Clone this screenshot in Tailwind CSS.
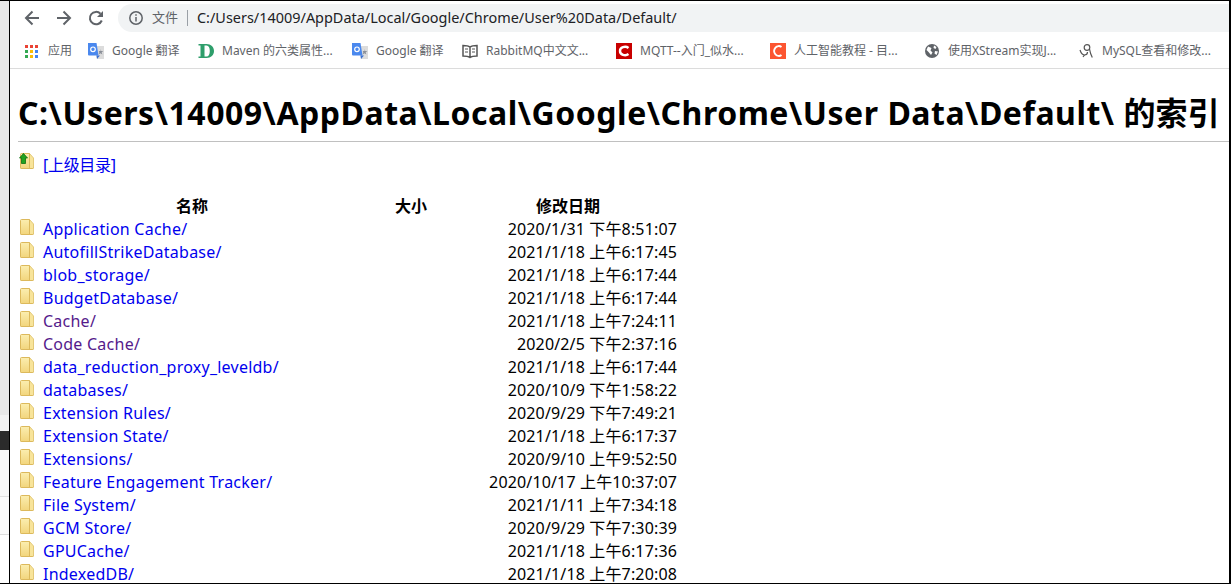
<!DOCTYPE html>
<html lang="zh-CN">
<head>
<meta charset="UTF-8">
<title>Default 的索引</title>
<script src="https://cdn.jsdelivr.net/npm/@tailwindcss/browser@4"></script>
</head>
<body class="w-[1231px] h-[584px] overflow-hidden bg-white font-['Noto_Sans','Noto_Sans_CJK_SC',sans-serif]">
<svg class="absolute w-0 h-0">
  <defs>
    <linearGradient id="fg" x1="0" y1="0" x2="0" y2="1"><stop offset="0" stop-color="#fbeeb0"/><stop offset="1" stop-color="#f2d57c"/></linearGradient>
  </defs>
  <symbol id="folder" viewBox="0 0 14 16">
    <path d="M9.500.5 13.500 5v9.500a1 1 0 0 1-1 1h-3z" fill="#f8e49a" stroke="#e3c978"/>
    <path d="M.5 1.500a1 1 0 0 1 1-1h8v15h-8a1 1 0 0 1-1-1z" fill="url(#fg)" stroke="#dcb95c"/>
    <path d="M.5 14.500a1 1 0 0 0 1 1h11a1 1 0 0 0 1-1" fill="none" stroke="#dcb95c"/>
  </symbol>
  <symbol id="gt" viewBox="0 0 16 16">
    <path d="M6 3h10v13H9z" fill="#dcdcdc"/>
    <path d="M0 0h8.500l2 12.500H1a1 1 0 0 1-1-1z" fill="#4a88ee"/>
    <path d="M8.500 12.500 9 16l3-3.500z" fill="#3a6fd0"/>
    <circle cx="5" cy="6.300" r="2.300" fill="none" stroke="#fff" stroke-width="1.200"/>
    <path d="m12.500 6 .8 2h2l-1.600 1.300.6 2.100-1.800-1.200-1.800 1.200.6-2.100L10.700 8h2z" fill="#8a8f98"/>
  </symbol>
</svg>

<div class="flex h-[584px] border-t border-b border-black">
  <!-- sliver of the window behind -->
  <div class="w-[9px] flex flex-col shrink-0 bg-[#e8e8e8]">
    <div class="h-[414px]"></div>
    <div class="h-[16px] bg-[#f2f2f2]"></div>
    <div class="h-[19px] bg-[#2b2b2b]"></div>
    <div class="h-[47px] bg-[#f8f8f8] border-b border-[#e0e0e0]"></div>
    <div class="h-[38px] bg-[#fbfbfb] border-b border-[#dddddd]"></div>
    <div class="flex-1 bg-white"></div>
  </div>

  <div class="flex-1 min-w-0 flex flex-col border-l border-r-2 border-black overflow-hidden">
    <!-- toolbar -->
    <div class="h-[31px] shrink-0 flex items-start pt-[3px]">
      <div class="w-[108px] h-[28px] shrink-0 flex items-center text-[#5f6368]">
        <svg class="ml-[14px] w-[16px] h-[16px]" viewBox="0 0 16 16" fill="none" stroke="currentColor" stroke-width="2"><path d="M15 8H2M8.500 1.500 2 8l6.500 6.500"/></svg>
        <svg class="ml-[16px] w-[16px] h-[16px]" viewBox="0 0 16 16" fill="none" stroke="currentColor" stroke-width="2"><path d="M1 8h13M7.500 1.500 14 8l-6.500 6.500"/></svg>
        <svg class="ml-[16px] w-[16px] h-[16px]" viewBox="0 0 16 16" fill="none" stroke="currentColor" stroke-width="2"><path d="M13.800 10.500A6.200 6.200 0 1 1 12.500 3.700"/><path d="M15 1v6H9z" fill="currentColor" stroke="none"/></svg>
      </div>
      <div class="flex-1 h-[28px] flex items-center rounded-l-[14px] bg-[#f1f3f4]">
        <svg class="ml-[10px] w-[16px] h-[16px] text-[#5f6368]" viewBox="0 0 16 16" fill="none" stroke="currentColor" stroke-width="1.500"><circle cx="8" cy="8" r="6.200"/><path d="M8 7v4.500M8 4.200v1.600"/></svg>
        <span class="ml-[8px] w-[28px] text-[13px] text-[#5f6368] whitespace-nowrap">文件</span>
        <span class="ml-[7px] w-px h-[16px] bg-[#9aa0a6]"></span>
        <span class="ml-[9px] text-[14.45px] text-[#202124] whitespace-nowrap">C:/Users/14009/AppData/Local/Google/Chrome/User%20Data/Default/</span>
      </div>
    </div>

    <!-- bookmarks -->
    <div class="h-[37px] shrink-0 flex items-center pt-[2px] border-b border-[#dcdcdc] text-[12px] text-[#5f6368] whitespace-nowrap">
      <div class="w-[78px] flex items-center gap-[10px] pl-[15px] shrink-0">
        <svg class="w-[13px] h-[13px]" viewBox="0 0 13 13"><rect width="3" height="3" fill="#ea4335"/><rect x="5" width="3" height="3" fill="#ea4335"/><rect x="10" width="3" height="3" fill="#ea4335"/><rect y="5" width="3" height="3" fill="#34a853"/><rect x="5" y="5" width="3" height="3" fill="#fbbc05"/><rect x="10" y="5" width="3" height="3" fill="#4285f4"/><rect y="10" width="3" height="3" fill="#34a853"/><rect x="5" y="10" width="3" height="3" fill="#fbbc05"/><rect x="10" y="10" width="3" height="3" fill="#4285f4"/></svg>
        <span>应用</span>
      </div>
      <div class="w-[110px] flex items-center gap-2 shrink-0"><svg class="w-4 h-4"><use href="#gt"/></svg><span>Google 翻译</span></div>
      <div class="w-[154px] flex items-center gap-2 shrink-0">
        <svg class="w-4 h-4" viewBox="0 0 16 16"><path d="M.5 1h8C13 1 16 4 16 8s-3 7-7.500 7h-8v-1.400h2V2.400h-2zM6.500 2.400v11.200h2c2.200 0 3.300-2.300 3.300-5.600s-1.100-5.600-3.300-5.600z" fill="#2e9e6b"/></svg>
        <span>Maven 的六类属性...</span>
      </div>
      <div class="w-[110px] flex items-center gap-2 shrink-0"><svg class="w-4 h-4"><use href="#gt"/></svg><span>Google 翻译</span></div>
      <div class="w-[154px] flex items-center gap-2 shrink-0">
        <svg class="w-4 h-4" viewBox="0 0 16 16" fill="none" stroke="#555" stroke-width="1.500"><path d="M8 4 C6 2.500 3.500 2.500 1 2.500v10.500c2.500 0 5 0 7 1.500 2-1.500 4.500-1.500 7-1.500V2.500C12.500 2.500 10 2.500 8 4zM8 4v10"/><path d="M3 6h3M3 9h3M10 6h3M10 9h3" stroke-width="1"/></svg>
        <span>RabbitMQ中文文...</span>
      </div>
      <div class="w-[154px] flex items-center gap-2 shrink-0">
        <svg class="w-4 h-4" viewBox="0 0 16 16"><rect width="16" height="16" fill="#c80000"/><path d="M12.500 5A5 4 0 0 0 4 8a5 4 0 0 0 8.500 3" fill="none" stroke="#fff" stroke-width="2.400"/></svg>
        <span>MQTT--入门_似水...</span>
      </div>
      <div class="w-[154px] flex items-center gap-2 shrink-0">
        <svg class="w-4 h-4" viewBox="0 0 16 16"><rect width="16" height="16" fill="#fc5531"/><path d="M11.500 4A4.500 5 0 1 0 11.500 12" fill="none" stroke="#fff" stroke-width="1.800"/></svg>
        <span>人工智能教程 - 目...</span>
      </div>
      <div class="w-[154px] flex items-center gap-[9px] pl-px shrink-0">
        <svg class="w-[14px] h-[14px]" viewBox="0 0 14 14"><circle cx="7" cy="7" r="7" fill="#5f6368"/><path d="M3 2.500 6.500 4 5.500 6.500 7.500 8.500 6 11 3.500 8 1.500 6zM9 1.500l2.500 1.500-1 2-2-1zM10 7l3 .5-1.500 3.500-2-1.500z" fill="#fff"/></svg>
        <span>使用XStream实现J...</span>
      </div>
      <div class="flex items-center gap-[9px] pl-px shrink-0">
        <svg class="w-[14px] h-[16px]" viewBox="0 0 14 16" fill="none" stroke="#555" stroke-width="1.200"><path d="M1 7c1 3 2.500 5 4.500 5 2 0 3-1.500 3-3"/><circle cx="8" cy="4.500" r="2.800"/><path d="M10.500 6c.5 3 1.500 6 2.800 8.500M5.500 12l-1.500 2"/></svg>
        <span>MySQL查看和修改...</span>
      </div>
    </div>

    <!-- directory listing -->
    <main class="flex-1 min-h-0 pl-[8px] text-[16px] text-black">
      <h1 class="pt-[24px] pb-[8px] border-b border-[#c0c0c0] text-[32px] leading-[40px] font-bold whitespace-nowrap"><span class="tracking-[0.52px]">C:\Users\14009\AppData\Local\Google\Chrome\User Data\Default\ </span>的索引</h1>
      <a href="#" class="mt-[11px] flex items-center gap-[9px] h-[24px] text-[#0000ee] leading-[24px]">
        <span class="relative block w-[16px] h-[16px] -translate-y-[4px]">
          <svg class="absolute left-[2px] top-0 w-[14px] h-[16px]"><use href="#folder"/></svg>
          <svg class="absolute left-[1px] top-0 w-[9px] h-[11px]" viewBox="0 0 9 11"><path d="M4.500.5 8.500 5H6.500v5.500h-4V5H.5z" fill="#22a31f" stroke="#0c6f12" stroke-width=".8"/></svg>
        </span>
        <span class="tracking-[-0.3px]">[上级目录]</span>
      </a>
      <table class="mt-[18px] table-fixed w-[659px] border-collapse leading-[23px]">
        <colgroup><col class="w-[345px]"><col class="w-[94px]"><col class="w-[220px]"></colgroup>
        <thead>
          <tr class="h-[23px] font-bold">
            <th class="p-0 text-center pl-[3px]">名称</th>
            <th class="p-0 text-right pr-[30px]">大小</th>
            <th class="p-0 text-right pr-[77px]">修改日期</th>
          </tr>
        </thead>
        <tbody>
          <tr class="h-[23px]"><td class="p-0"><a href="#" class="flex items-center gap-[9px] tracking-[0.24px] text-[#0000ee]"><svg class="ml-[2px] w-[14px] h-[16px] -translate-y-[3px]"><use href="#folder"/></svg>Application Cache/</a></td><td></td><td class="p-0 text-right tracking-[0.15px] whitespace-nowrap">2020/1/31 下午8:51:07</td></tr>
          <tr class="h-[23px]"><td class="p-0"><a href="#" class="flex items-center gap-[9px] tracking-[0.24px] text-[#0000ee]"><svg class="ml-[2px] w-[14px] h-[16px] -translate-y-[3px]"><use href="#folder"/></svg>AutofillStrikeDatabase/</a></td><td></td><td class="p-0 text-right tracking-[0.15px] whitespace-nowrap">2021/1/18 上午6:17:45</td></tr>
          <tr class="h-[23px]"><td class="p-0"><a href="#" class="flex items-center gap-[9px] tracking-[0.24px] text-[#0000ee]"><svg class="ml-[2px] w-[14px] h-[16px] -translate-y-[3px]"><use href="#folder"/></svg>blob_storage/</a></td><td></td><td class="p-0 text-right tracking-[0.15px] whitespace-nowrap">2021/1/18 上午6:17:44</td></tr>
          <tr class="h-[23px]"><td class="p-0"><a href="#" class="flex items-center gap-[9px] tracking-[0.24px] text-[#0000ee]"><svg class="ml-[2px] w-[14px] h-[16px] -translate-y-[3px]"><use href="#folder"/></svg>BudgetDatabase/</a></td><td></td><td class="p-0 text-right tracking-[0.15px] whitespace-nowrap">2021/1/18 上午6:17:44</td></tr>
          <tr class="h-[23px]"><td class="p-0"><a href="#" class="flex items-center gap-[9px] tracking-[0.24px] text-[#551a8b]"><svg class="ml-[2px] w-[14px] h-[16px] -translate-y-[3px]"><use href="#folder"/></svg>Cache/</a></td><td></td><td class="p-0 text-right tracking-[0.15px] whitespace-nowrap">2021/1/18 上午7:24:11</td></tr>
          <tr class="h-[23px]"><td class="p-0"><a href="#" class="flex items-center gap-[9px] tracking-[0.24px] text-[#551a8b]"><svg class="ml-[2px] w-[14px] h-[16px] -translate-y-[3px]"><use href="#folder"/></svg>Code Cache/</a></td><td></td><td class="p-0 text-right tracking-[0.15px] whitespace-nowrap">2020/2/5 下午2:37:16</td></tr>
          <tr class="h-[23px]"><td class="p-0"><a href="#" class="flex items-center gap-[9px] tracking-[0.24px] text-[#0000ee]"><svg class="ml-[2px] w-[14px] h-[16px] -translate-y-[3px]"><use href="#folder"/></svg>data_reduction_proxy_leveldb/</a></td><td></td><td class="p-0 text-right tracking-[0.15px] whitespace-nowrap">2021/1/18 上午6:17:44</td></tr>
          <tr class="h-[23px]"><td class="p-0"><a href="#" class="flex items-center gap-[9px] tracking-[0.24px] text-[#0000ee]"><svg class="ml-[2px] w-[14px] h-[16px] -translate-y-[3px]"><use href="#folder"/></svg>databases/</a></td><td></td><td class="p-0 text-right tracking-[0.15px] whitespace-nowrap">2020/10/9 下午1:58:22</td></tr>
          <tr class="h-[23px]"><td class="p-0"><a href="#" class="flex items-center gap-[9px] tracking-[0.24px] text-[#0000ee]"><svg class="ml-[2px] w-[14px] h-[16px] -translate-y-[3px]"><use href="#folder"/></svg>Extension Rules/</a></td><td></td><td class="p-0 text-right tracking-[0.15px] whitespace-nowrap">2020/9/29 下午7:49:21</td></tr>
          <tr class="h-[23px]"><td class="p-0"><a href="#" class="flex items-center gap-[9px] tracking-[0.24px] text-[#0000ee]"><svg class="ml-[2px] w-[14px] h-[16px] -translate-y-[3px]"><use href="#folder"/></svg>Extension State/</a></td><td></td><td class="p-0 text-right tracking-[0.15px] whitespace-nowrap">2021/1/18 上午6:17:37</td></tr>
          <tr class="h-[23px]"><td class="p-0"><a href="#" class="flex items-center gap-[9px] tracking-[0.24px] text-[#0000ee]"><svg class="ml-[2px] w-[14px] h-[16px] -translate-y-[3px]"><use href="#folder"/></svg>Extensions/</a></td><td></td><td class="p-0 text-right tracking-[0.15px] whitespace-nowrap">2020/9/10 上午9:52:50</td></tr>
          <tr class="h-[23px]"><td class="p-0"><a href="#" class="flex items-center gap-[9px] tracking-[0.24px] text-[#0000ee]"><svg class="ml-[2px] w-[14px] h-[16px] -translate-y-[3px]"><use href="#folder"/></svg>Feature Engagement Tracker/</a></td><td></td><td class="p-0 text-right tracking-[0.15px] whitespace-nowrap">2020/10/17 上午10:37:07</td></tr>
          <tr class="h-[23px]"><td class="p-0"><a href="#" class="flex items-center gap-[9px] tracking-[0.24px] text-[#0000ee]"><svg class="ml-[2px] w-[14px] h-[16px] -translate-y-[3px]"><use href="#folder"/></svg>File System/</a></td><td></td><td class="p-0 text-right tracking-[0.15px] whitespace-nowrap">2021/1/11 上午7:34:18</td></tr>
          <tr class="h-[23px]"><td class="p-0"><a href="#" class="flex items-center gap-[9px] tracking-[0.24px] text-[#0000ee]"><svg class="ml-[2px] w-[14px] h-[16px] -translate-y-[3px]"><use href="#folder"/></svg>GCM Store/</a></td><td></td><td class="p-0 text-right tracking-[0.15px] whitespace-nowrap">2020/9/29 下午7:30:39</td></tr>
          <tr class="h-[23px]"><td class="p-0"><a href="#" class="flex items-center gap-[9px] tracking-[0.24px] text-[#0000ee]"><svg class="ml-[2px] w-[14px] h-[16px] -translate-y-[3px]"><use href="#folder"/></svg>GPUCache/</a></td><td></td><td class="p-0 text-right tracking-[0.15px] whitespace-nowrap">2021/1/18 上午6:17:36</td></tr>
          <tr class="h-[23px]"><td class="p-0"><a href="#" class="flex items-center gap-[9px] tracking-[0.24px] text-[#0000ee]"><svg class="ml-[2px] w-[14px] h-[16px] -translate-y-[3px]"><use href="#folder"/></svg>IndexedDB/</a></td><td></td><td class="p-0 text-right tracking-[0.15px] whitespace-nowrap">2021/1/18 上午7:20:08</td></tr>
        </tbody>
      </table>
    </main>
  </div>
</div>
</body>
</html>
